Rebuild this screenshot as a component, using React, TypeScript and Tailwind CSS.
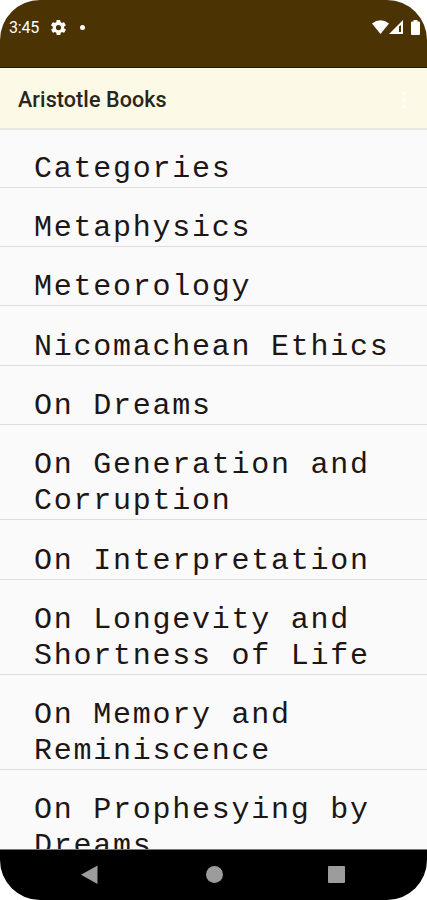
const books = [
  "Categories",
  "Metaphysics",
  "Meteorology",
  "Nicomachean Ethics",
  "On Dreams",
  "On Generation and Corruption",
  "On Interpretation",
  "On Longevity and Shortness of Life",
  "On Memory and Reminiscence",
  "On Prophesying by Dreams",
];

function StatusBar() {
  return (
    <div className="flex h-[68px] shrink-0 items-start justify-between border-b border-[#3a0d00] bg-[#4b3303] pl-[9px] pr-[7px] text-white">
      <div className="flex h-[54px] items-center">
        <span className="w-[42px] pt-[2px] text-[16px] tracking-[-0.2px]">3:45</span>
        <svg viewBox="2 2 20 20" className="h-[15px] w-[15px]" fill="currentColor">
          <path
            fillRule="evenodd"
            d="M19.4 13a7.5 7.5 0 0 0 0-2l2.1-1.6c.2-.2.2-.4.1-.6l-2-3.5c-.1-.2-.4-.3-.6-.2l-2.5 1a7.3 7.3 0 0 0-1.7-1l-.4-2.6a.5.5 0 0 0-.5-.5h-4c-.2 0-.5.2-.5.5L9 5.1a7.3 7.3 0 0 0-1.7 1l-2.5-1c-.2-.1-.5 0-.6.2l-2 3.5c-.1.2-.1.4.1.6L4.5 11a7.5 7.5 0 0 0 0 2l-2.1 1.6c-.2.2-.2.4-.1.6l2 3.5c.1.2.4.3.6.2l2.5-1c.5.4 1.1.7 1.7 1l.4 2.6c0 .3.3.5.5.5h4c.2 0 .5-.2.5-.5l.4-2.6a7.3 7.3 0 0 0 1.7-1l2.5 1c.2.1.5 0 .6-.2l2-3.5c.1-.2.1-.4-.1-.6L19.4 13zM12 15.5a3.5 3.5 0 1 1 0-7 3.5 3.5 0 0 1 0 7z"
          />
        </svg>
        <span className="ml-[14px] h-[5px] w-[5px] rounded-full bg-white" />
      </div>
      <div className="flex h-[54px] items-center">
        <svg viewBox="0 0 17 14" className="h-[14px] w-[17px]" fill="currentColor">
          <path d="M0 3.5Q8.5-3 17 3.5L8.5 14z" />
        </svg>
        <svg viewBox="0 0 15 14" className="h-[14px] w-[15px]" fill="currentColor">
          <path fillRule="evenodd" d="M0 14 14 0v14zM10 6.5V12h2V5z" />
        </svg>
        <svg viewBox="0 0 9 15" className="ml-[7px] h-[15px] w-[9px]" fill="currentColor">
          <path d="M2.5 0h4v1.5H8q1 0 1 1V14q0 1-1 1H1q-1 0-1-1V2.5q0-1 1-1h1.5z" />
        </svg>
      </div>
    </div>
  );
}

function AppBar() {
  return (
    <header className="flex h-[62px] shrink-0 items-center justify-between border-b-2 border-[#e7e7e3] bg-[#fcfae6] pl-[18px] pr-[21px]">
      <h1 className="pt-[4px] text-[21.5px] font-medium tracking-[0.1px] text-[#2a261d]">
        Aristotle Books
      </h1>
      <div className="flex flex-col gap-[3px] pt-1">
        <span className="h-[4px] w-[4px] rounded-full bg-[#fffdf7]" />
        <span className="h-[4px] w-[4px] rounded-full bg-[#fffdf7]" />
        <span className="h-[4px] w-[4px] rounded-full bg-[#fffdf7]" />
      </div>
    </header>
  );
}

function NavBar() {
  return (
    <nav className="flex h-[51px] shrink-0 items-center border-t border-[#777777] bg-black pl-[81px] text-[#9c9c9c]">
      <svg viewBox="0 0 17 20" className="h-5 w-[17px]" fill="currentColor">
        <path d="M16.5.5v18.5L0 9.75z" />
      </svg>
      <span className="mb-px ml-[108px] h-[17px] w-[17px] rounded-full bg-[#9c9c9c]" />
      <span className="mb-px ml-[105px] h-[17px] w-[17px] rounded-[1px] bg-[#9c9c9c]" />
    </nav>
  );
}

export default function App() {
  return (
    <div className="h-[900px] w-[427px] bg-white">
      <div className="flex h-full flex-col overflow-hidden rounded-[40px] bg-[#fafafa] font-['Roboto',sans-serif]">
        <StatusBar />
        <AppBar />
        <ul className="-mt-[1.5px] min-h-0 flex-1 overflow-hidden">
          {books.map((book) => (
            <li
              key={book}
              className="border-b border-[#dedede] pl-[34px] pr-6 pt-[22.3px] font-['Liberation_Mono',monospace] text-[30px] leading-[36px] tracking-[1.74px] text-[#1d1616]"
            >
              {book}
            </li>
          ))}
        </ul>
        <NavBar />
      </div>
    </div>
  );
}
